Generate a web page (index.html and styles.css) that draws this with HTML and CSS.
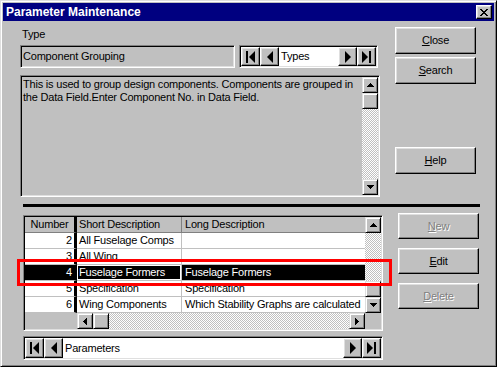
FILE: index.html
```html
<!DOCTYPE html>
<html>
<head>
<meta charset="utf-8">
<link rel="stylesheet" href="styles.css">
</head>
<body>
<div class="window">
  <div class="titlebar">
    <span class="title">Parameter Maintenance</span>
    <span class="tb-close"><svg width="8" height="7" viewBox="0 0 8 7"><path d="M0 0h2v1H0zM6 0h2v1H6zM1 1h2v1H1zM5 1h2v1H5zM2 2h4v1H2zM3 3h2v1H3zM2 4h4v1H2zM1 5h2v1H1zM5 5h2v1H5zM0 6h2v1H0zM6 6h2v1H6z"/></svg></span>
  </div>

  <div class="top">
    <div class="top-left">
      <div class="label">Type</div>
      <div class="type-row">
        <div class="field type-field">Component Grouping</div>
        <div class="nav nav-types">
          <span class="navbtn"><svg width="9" height="12" viewBox="0 0 9 12"><rect x="0" y="0" width="2" height="12"/><polygon points="9,0 3,6 9,12"/></svg></span>
          <span class="navbtn"><svg width="6" height="12" viewBox="0 0 6 12"><polygon points="6,0 0,6 6,12"/></svg></span>
          <span class="navtext">Types</span>
          <span class="navbtn"><svg width="6" height="12" viewBox="0 0 6 12"><polygon points="0,0 6,6 0,12"/></svg></span>
          <span class="navbtn"><svg width="9" height="12" viewBox="0 0 9 12"><polygon points="0,0 6,6 0,12"/><rect x="7" y="0" width="2" height="12"/></svg></span>
        </div>
      </div>
      <div class="memo">
        <div class="memo-text">This is used to group design components. Components are grouped in the Data Field.Enter Component No. in Data Field.</div>
        <div class="vscroll">
          <span class="sb-btn"><svg width="7" height="4" viewBox="0 0 7 4"><path d="M3 0h1v1H3zM2 1h3v1H2zM1 2h5v1H1zM0 3h7v1H0z"/></svg></span>
          <span class="sb-thumb"></span>
          <span class="sb-track"></span>
          <span class="sb-btn"><svg width="7" height="4" viewBox="0 0 7 4"><path d="M0 0h7v1H0zM1 1h5v1H1zM2 2h3v1H2zM3 3h1v1H3z"/></svg></span>
        </div>
      </div>
    </div>
    <div class="top-right">
      <div class="btn"><span><u>C</u>lose</span></div>
      <div class="btn btn-search"><span><u>S</u>earch</span></div>
      <div class="btn btn-help"><span><u>H</u>elp</span></div>
    </div>
  </div>

  <div class="sep"></div>

  <div class="bottom">
    <div class="bottom-left">
      <div class="grid">
        <div class="grid-main">
          <div class="table">
            <div class="row head">
              <div class="c num">Number</div>
              <div class="c short">Short Description</div>
              <div class="c long">Long Description</div>
            </div>
            <div class="row">
              <div class="c num">2</div>
              <div class="c short">All Fuselage Comps</div>
              <div class="c long"></div>
            </div>
            <div class="row">
              <div class="c num">3</div>
              <div class="c short">All Wing</div>
              <div class="c long"></div>
            </div>
            <div class="row sel">
              <div class="c num">4</div>
              <div class="c short focus">Fuselage Formers</div>
              <div class="c long">Fuselage Formers</div>
            </div>
            <div class="row">
              <div class="c num">5</div>
              <div class="c short">Specification</div>
              <div class="c long">Specification</div>
            </div>
            <div class="row">
              <div class="c num">6</div>
              <div class="c short">Wing Components</div>
              <div class="c long">Which Stability Graphs are calculated</div>
            </div>
          </div>
          <div class="vscroll">
            <span class="sb-btn"><svg width="7" height="4" viewBox="0 0 7 4"><path d="M3 0h1v1H3zM2 1h3v1H2zM1 2h5v1H1zM0 3h7v1H0z"/></svg></span>
            <span class="sb-track"></span>
            <span class="sb-thumb"></span>
            <span class="sb-btn"><svg width="7" height="4" viewBox="0 0 7 4"><path d="M0 0h7v1H0zM1 1h5v1H1zM2 2h3v1H2zM3 3h1v1H3z"/></svg></span>
          </div>
        </div>
        <div class="grid-foot">
          <div class="frozen-pad"></div>
          <div class="hscroll">
            <span class="sb-btn"><svg width="4" height="7" viewBox="0 0 4 7"><path d="M3 0h1v7H3zM2 1h1v5H2zM1 2h1v3H1zM0 3h1v1H0z"/></svg></span>
            <span class="sb-thumb"></span>
            <span class="sb-track"></span>
            <span class="sb-btn"><svg width="4" height="7" viewBox="0 0 4 7"><path d="M0 0h1v7H0zM1 1h1v5H1zM2 2h1v3H2zM3 3h1v1H3z"/></svg></span>
          </div>
          <div class="corner"></div>
        </div>
      </div>
      <div class="nav nav-params">
        <span class="navbtn"><svg width="9" height="12" viewBox="0 0 9 12"><rect x="0" y="0" width="2" height="12"/><polygon points="9,0 3,6 9,12"/></svg></span>
        <span class="navbtn"><svg width="6" height="12" viewBox="0 0 6 12"><polygon points="6,0 0,6 6,12"/></svg></span>
        <span class="navtext">Parameters</span>
        <span class="navbtn"><svg width="6" height="12" viewBox="0 0 6 12"><polygon points="0,0 6,6 0,12"/></svg></span>
        <span class="navbtn"><svg width="9" height="12" viewBox="0 0 9 12"><polygon points="0,0 6,6 0,12"/><rect x="7" y="0" width="2" height="12"/></svg></span>
      </div>
    </div>
    <div class="bottom-right">
      <div class="btn btn-small disabled"><span><u>N</u>ew</span></div>
      <div class="btn btn-small"><span><u>E</u>dit</span></div>
      <div class="btn btn-small disabled"><span><u>D</u>elete</span></div>
    </div>
  </div>

  <div class="highlight"></div>
</div>
</body>
</html>
```

FILE: styles.css
```css
* { box-sizing: border-box; }

body {
  margin: 0;
  background: #c0c0c0;
  font-family: "Liberation Sans", Arial, sans-serif;
  font-size: 11px;
  line-height: 13px;
  letter-spacing: -0.2px;
  color: #000;
}

.window {
  position: relative;
  width: 497px;
  height: 367px;
  background: #c0c0c0;
  border: 1px solid;
  border-color: #dfdfdf #000 #000 #dfdfdf;
  box-shadow: inset 1px 1px #fff, inset -1px -1px #808080;
  padding: 2px;
}

/* Title bar */
.titlebar {
  height: 18px;
  background: #000080;
  color: #fff;
  display: flex;
  align-items: center;
  justify-content: space-between;
  padding: 0 2px 0 3px;
}
.title {
  font-weight: bold;
  font-size: 12px;
  letter-spacing: 0;
}
.tb-close {
  width: 16px;
  height: 14px;
  background: #c0c0c0;
  border: 1px solid;
  border-color: #fff #000 #000 #fff;
  box-shadow: inset -1px -1px #808080, inset 1px 1px #dfdfdf;
  display: flex;
  align-items: center;
  justify-content: center;
}
.tb-close svg { fill: #000; display: block; }

/* Top section */
.top {
  display: flex;
  padding-left: 17px;
}
.top-left {
  width: 360px;
  padding-top: 7px;
}
.label {
  height: 14px;
  margin-bottom: 3px;
  padding-left: 2px;
}
.type-row {
  display: flex;
  gap: 4px;
  height: 23px;
}

.field,
.nav,
.memo,
.grid {
  border: 1px solid;
  border-color: #808080 #fff #fff #808080;
  box-shadow: inset 1px 1px #000, inset -1px -1px #dfdfdf;
  padding: 1px;
}

.type-field {
  width: 215px;
  padding-left: 2px;
  line-height: 19px;
  white-space: nowrap;
}

.nav {
  display: flex;
}
.nav-types {
  width: 139px;
  height: 23px;
}
.navbtn {
  width: 19px;
  flex: none;
  background: #c0c0c0;
  border: 1px solid;
  border-color: #fff #000 #000 #fff;
  box-shadow: inset -1px -1px #808080, inset 1px 1px #dfdfdf;
  display: flex;
  align-items: center;
  justify-content: center;
}
.navbtn svg { fill: #000; display: block; }
.navtext {
  flex: 1;
  background: #fff;
  padding-left: 2px;
  display: flex;
  align-items: center;
  white-space: nowrap;
}

.memo {
  margin-top: 7px;
  height: 122px;
  display: flex;
}
.memo-text {
  flex: 1;
  padding: 1px 2px 0 1px;
}

/* Scrollbars */
.vscroll {
  width: 16px;
  flex: none;
  display: flex;
  flex-direction: column;
}
.hscroll {
  flex: 1;
  display: flex;
}
.sb-btn,
.sb-thumb,
.corner {
  width: 16px;
  height: 16px;
  flex: none;
  background: #c0c0c0;
}
.sb-btn,
.sb-thumb {
  border: 1px solid;
  border-color: #dfdfdf #000 #000 #dfdfdf;
  box-shadow: inset 1px 1px #fff, inset -1px -1px #808080;
  display: flex;
  align-items: center;
  justify-content: center;
}
.sb-btn svg { fill: #000; display: block; }
.sb-track {
  flex: 1;
  background: repeating-conic-gradient(#fff 0 25%, #c0c0c0 0 50%) 0 0 / 2px 2px;
}

/* Buttons */
.top-right {
  margin-left: 15px;
  width: 81px;
  padding-top: 6px;
  display: flex;
  flex-direction: column;
}
.btn {
  height: 27px;
  background: #c0c0c0;
  border: 1px solid;
  border-color: #fff #000 #000 #fff;
  box-shadow: inset -1px -1px #808080, inset 1px 1px #dfdfdf;
  display: flex;
  align-items: center;
  justify-content: center;
}
.btn-search { margin-top: 3px; }
.btn-help { margin-top: 63px; }
.btn-small { height: 26px; }
.disabled {
  color: #808080;
  text-shadow: 1px 1px 0 #fff;
}

.sep {
  margin: 7px 0 0 20px;
  width: 457px;
  height: 3px;
  background: #000;
}

/* Bottom section */
.bottom {
  display: flex;
  padding-left: 20px;
}
.bottom-left {
  width: 360px;
  padding-top: 8px;
}
.bottom-right {
  margin-left: 15px;
  width: 81px;
  padding-top: 6px;
  display: flex;
  flex-direction: column;
  gap: 9px;
}

.grid {
  height: 116px;
  display: flex;
  flex-direction: column;
}
.grid-main {
  display: flex;
  height: 96px;
}
.table {
  flex: 1;
  display: flex;
  flex-direction: column;
}
.row {
  display: flex;
  height: 16px;
  background: #fff;
}
.c {
  height: 16px;
  border-bottom: 1px solid #c0c0c0;
  white-space: nowrap;
  overflow: hidden;
  line-height: 15px;
}
.num {
  width: 52px;
  border-right: 3px solid #000;
  text-align: right;
  padding-right: 2px;
}
.short {
  width: 105px;
  border-right: 1px solid #c0c0c0;
  padding-left: 2px;
}
.long {
  flex: 1;
  padding-left: 3px;
}
.head {
  background: #c0c0c0;
}
.head .c {
  border-bottom-color: #808080;
}
.head .num {
  text-align: center;
  padding-right: 0;
}
.head .short {
  border-right-color: #808080;
}
.sel .c {
  background: #000;
  color: #fff;
}
.sel .focus {
  box-shadow: inset 0 0 0 1px #fff;
}

.grid-foot {
  display: flex;
  height: 16px;
}
.frozen-pad {
  width: 52px;
  flex: none;
  background: #c0c0c0;
}

.nav-params {
  margin-top: 5px;
  height: 24px;
}

/* Overlay highlight */
.highlight {
  position: absolute;
  left: 16px;
  top: 258px;
  width: 375px;
  height: 27px;
  border: 3px solid #ff0000;
}
```
